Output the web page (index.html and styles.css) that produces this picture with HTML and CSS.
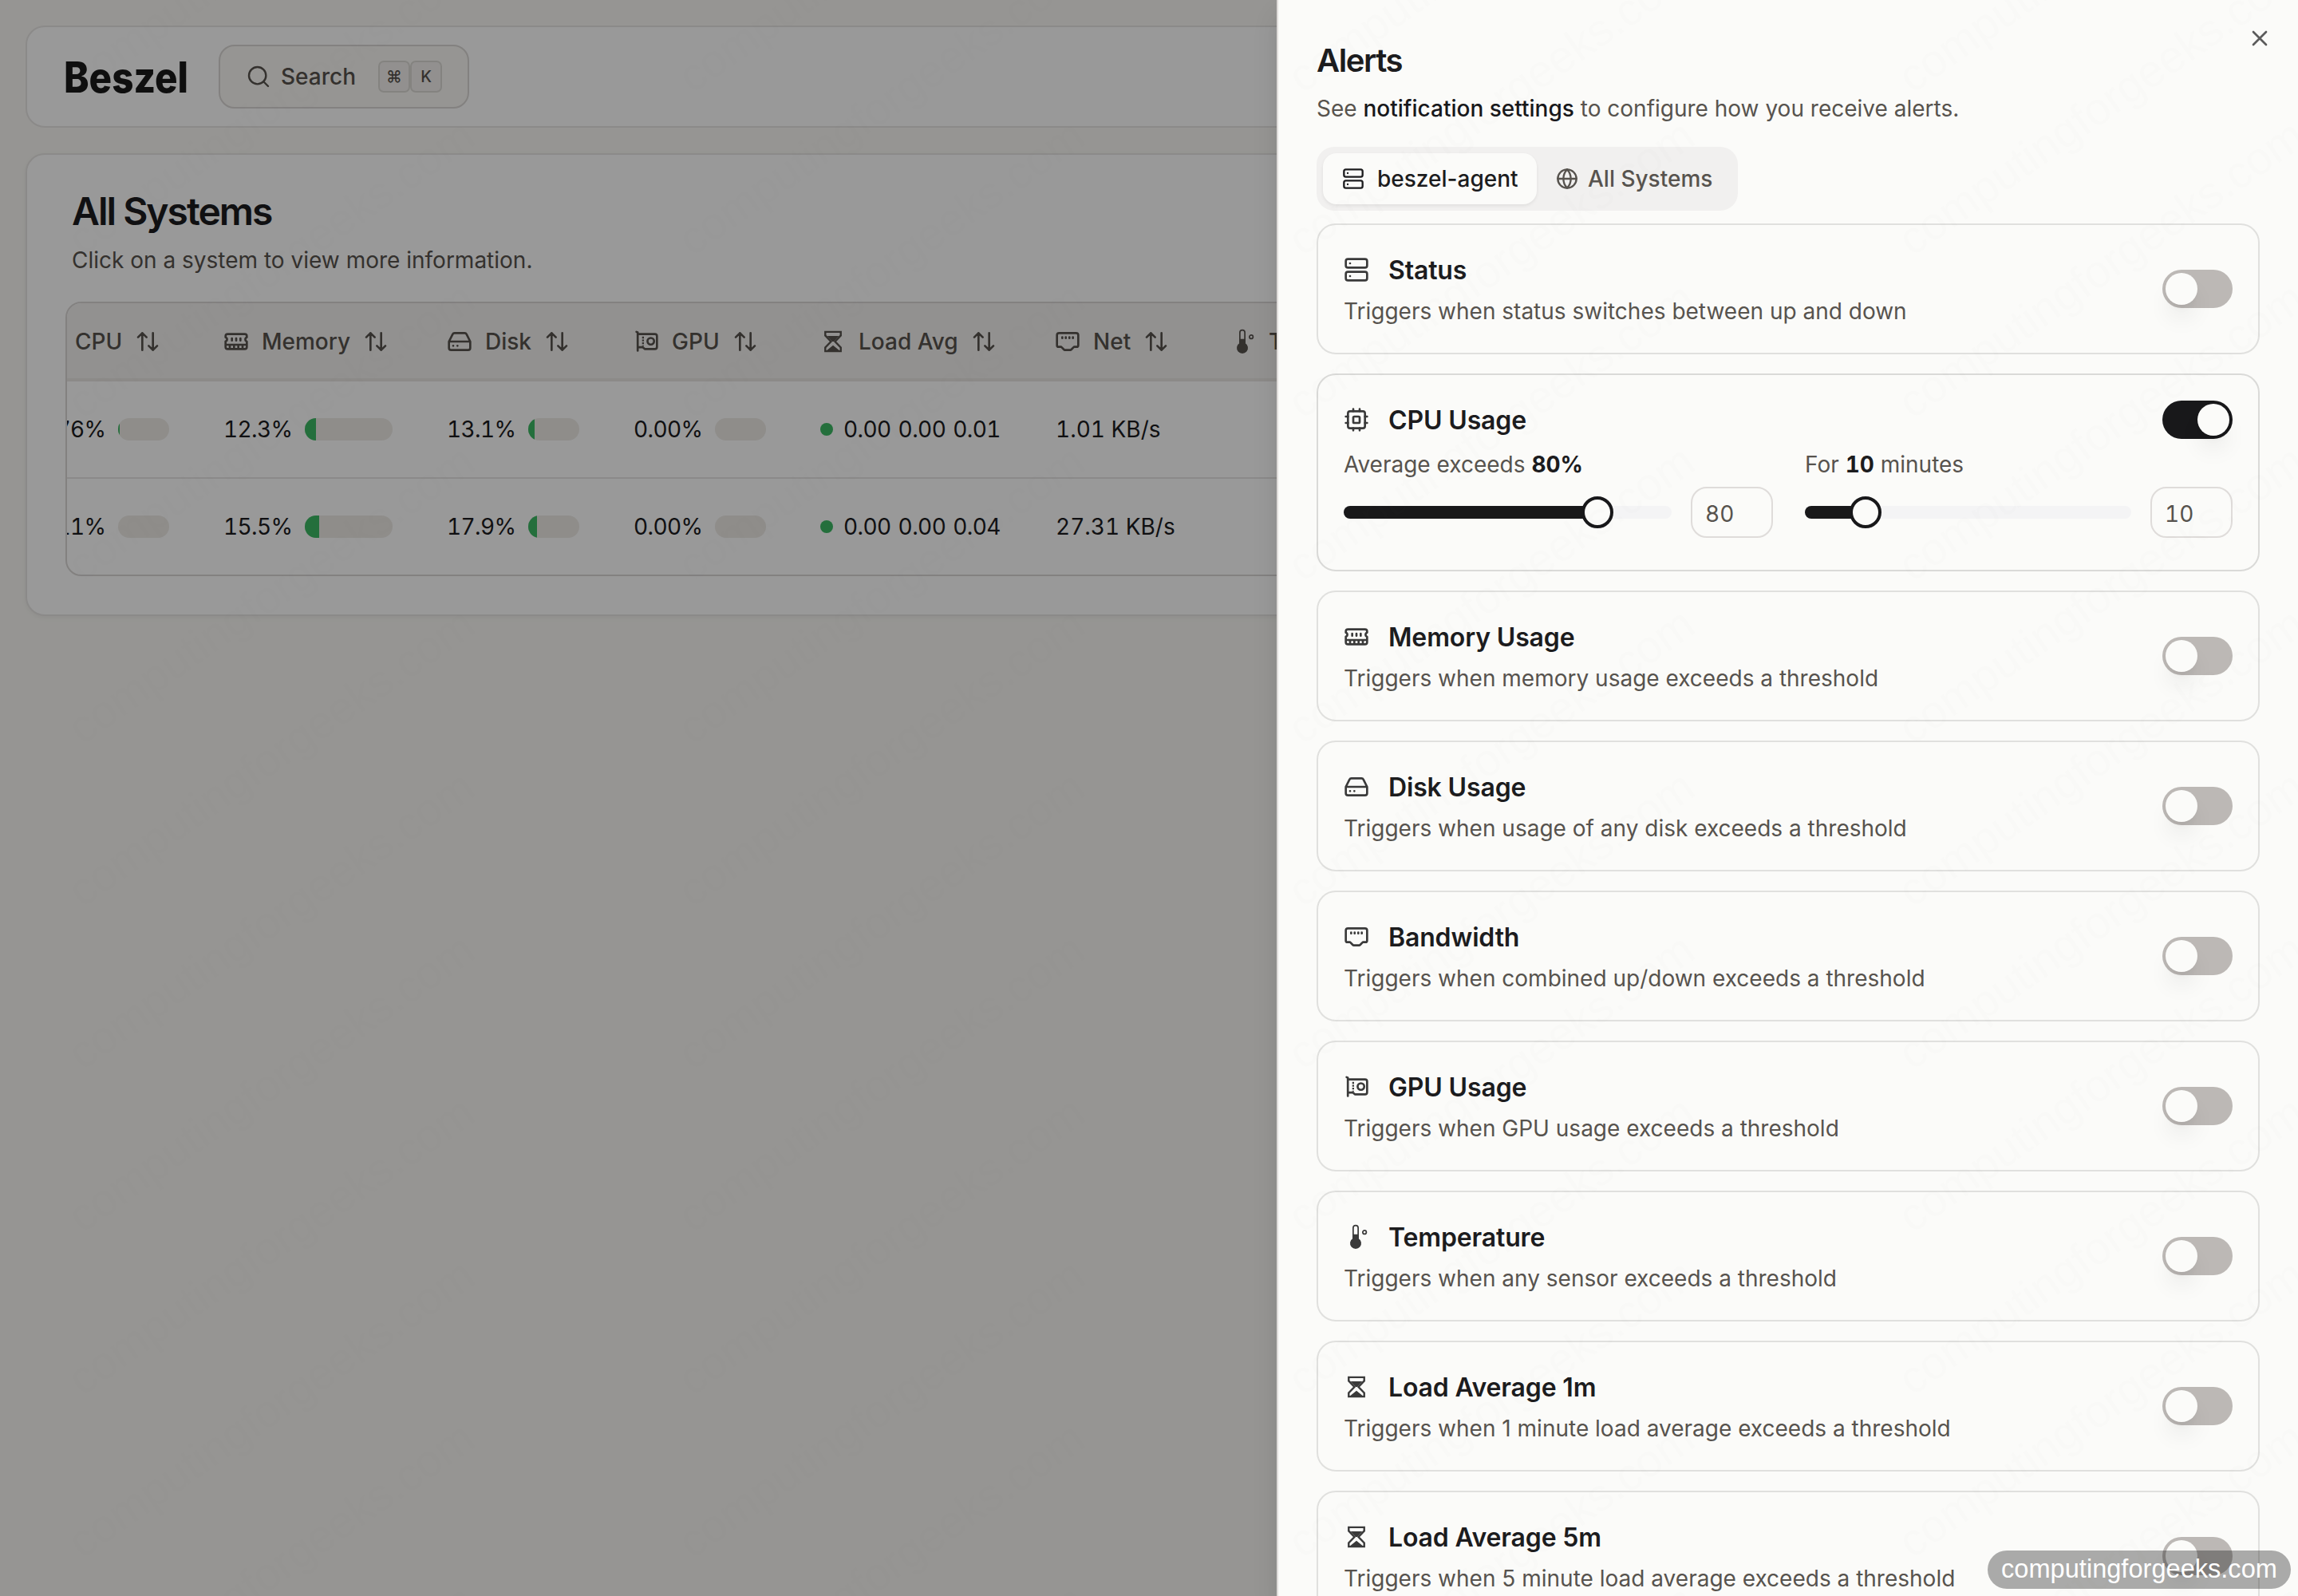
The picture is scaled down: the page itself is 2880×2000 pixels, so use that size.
FILE: index.html
```
<!DOCTYPE html>
<html lang="en">
<head>
	<meta charset="UTF-8">
	<title>All Systems / Beszel</title>
	<link rel="stylesheet" href="styles.css">
</head>
<body>
	<svg class="sprite" aria-hidden="true">
		<symbol id="i-search" viewBox="0 0 24 24"><circle cx="11" cy="11" r="8"/><path d="m21 21-4.3-4.3"/></symbol>
		<symbol id="i-sort" viewBox="0 0 24 24"><path d="m21 16-4 4-4-4M17 20V4M3 8l4-4 4 4M7 4v16"/></symbol>
		<symbol id="i-close" viewBox="0 0 24 24"><path d="M18 6 6 18M6 6l12 12"/></symbol>
		<symbol id="i-globe" viewBox="0 0 24 24"><circle cx="12" cy="12" r="10"/><path d="M12 2a14.5 14.5 0 0 0 0 20 14.5 14.5 0 0 0 0-20M2 12h20"/></symbol>
		<symbol id="i-server" viewBox="0 0 24 24"><rect x="2" y="2" width="20" height="8" rx="2"/><rect x="2" y="14" width="20" height="8" rx="2"/><path d="M6 6h.01M6 18h.01"/></symbol>
		<symbol id="i-cpu" viewBox="0 0 24 24"><rect x="4" y="4" width="16" height="16" rx="2"/><rect x="9" y="9" width="6" height="6" rx="1"/><path d="M15 2v2M15 20v2M2 15h2M2 9h2M20 15h2M20 9h2M9 2v2M9 20v2"/></symbol>
		<symbol id="i-memory" viewBox="0 0 24 24"><path d="M6 19v-3M10 19v-3M14 19v-3M18 19v-3M8 11V9M16 11V9M12 11V9M2 15h20M2 7a2 2 0 0 1 2-2h16a2 2 0 0 1 2 2v1.1a2 2 0 0 0 0 3.837V17a2 2 0 0 1-2 2H4a2 2 0 0 1-2-2v-5.1a2 2 0 0 0 0-3.837Z"/></symbol>
		<symbol id="i-disk" viewBox="0 0 24 24"><path d="M22 12H2M5.45 5.11 2 12v6a2 2 0 0 0 2 2h16a2 2 0 0 0 2-2v-6l-3.45-6.89A2 2 0 0 0 16.76 4H7.24a2 2 0 0 0-1.79 1.11zM6 16h.01M10 16h.01"/></symbol>
		<symbol id="i-gpu" viewBox="0 0 24 24"><path d="M2.7 2.9l1.2.5V20.6M3.9 5H20a2 2 0 0 1 2 2v10a2 2 0 0 1-2 2h-9.500l-2-1.700H3.900"/><circle cx="16.2" cy="11.7" r="3.1"/><path class="dash" d="M8.9 7.4v9"/></symbol>
		<symbol id="i-net" viewBox="0 0 24 24"><path d="M4 4h16a2 2 0 0 1 2 2v9.500a1.500 1.500 0 0 1-1.500 1.500H18l-2.700 2.700a1 1 0 0 1-.7.3H9.400a1 1 0 0 1-.7-.3L6 17H3.500A1.500 1.500 0 0 1 2 15.500V6a2 2 0 0 1 2-2zM7 8v.8M10.300 8v.8M13.700 8v.8M17 8v.8"/></symbol>
		<symbol id="i-hourglass" viewBox="0 0 24 24"><path class="sharp" d="M4.700 2.900h14.600V6.300L13.900 12l5.400 5.600v3.500H4.700v-3.500L10.100 12 4.700 6.300z"/><path class="solid" d="M6.500 6.700h11L12.700 12h-1.400zM12 15.600l5.800 4.700H6.200z"/></symbol>
		<symbol id="i-temp" viewBox="0 0 24 24"><path class="thin" d="M8.900 3.600a2.350 2.350 0 0 1 4.700 0V14a4.600 4.600 0 1 1-4.700 0z"/><path class="solid" d="M8.900 9.600h4.700V14a4.600 4.600 0 1 1-4.700 0z"/><circle class="thin" cx="19.600" cy="7.600" r="1.700"/></symbol>
	</svg>

	<div class="page">
		<div class="navbar">
			<svg class="logo" width="160" height="72"><text x="-2" y="56" textLength="156" lengthAdjust="spacingAndGlyphs">Beszel</text></svg>
			<div class="search">
				<svg class="icon"><use href="#i-search"/></svg>
				<span>Search</span>
				<div class="keys"><kbd>⌘</kbd><kbd>K</kbd></div>
			</div>
		</div>

		<div class="systems">
			<h1>All Systems</h1>
			<p>Click on a system to view more information.</p>
			<div class="table">
				<div class="row thead">
					<div class="cell"><svg class="icon"><use href="#i-cpu"/></svg>CPU<svg class="icon"><use href="#i-sort"/></svg></div>
					<div class="cell"><svg class="icon"><use href="#i-memory"/></svg>Memory<svg class="icon"><use href="#i-sort"/></svg></div>
					<div class="cell"><svg class="icon"><use href="#i-disk"/></svg>Disk<svg class="icon"><use href="#i-sort"/></svg></div>
					<div class="cell"><svg class="icon"><use href="#i-gpu"/></svg>GPU<svg class="icon"><use href="#i-sort"/></svg></div>
					<div class="cell"><svg class="icon"><use href="#i-hourglass"/></svg>Load Avg<svg class="icon"><use href="#i-sort"/></svg></div>
					<div class="cell"><svg class="icon"><use href="#i-net"/></svg>Net<svg class="icon"><use href="#i-sort"/></svg></div>
					<div class="cell"><svg class="icon"><use href="#i-temp"/></svg>Temp<svg class="icon"><use href="#i-sort"/></svg></div>
				</div>
				<div class="row">
					<div class="cell"><span class="num">0.76%</span><span class="meter"><i style="width:2.5%"></i></span></div>
					<div class="cell"><span class="num">12.3%</span><span class="meter wide"><i style="width:12.8%"></i></span></div>
					<div class="cell"><span class="num">13.1%</span><span class="meter"><i style="width:13.1%"></i></span></div>
					<div class="cell"><span class="num">0.00%</span><span class="meter"></span></div>
					<div class="cell load"><b class="dot"></b><span>0.00</span><span>0.00</span><span>0.01</span></div>
					<div class="cell net">1.01 KB/s</div>
					<div class="cell"></div>
				</div>
				<div class="row">
					<div class="cell"><span class="num">0.11%</span><span class="meter"></span></div>
					<div class="cell"><span class="num">15.5%</span><span class="meter wide"><i style="width:16%"></i></span></div>
					<div class="cell"><span class="num">17.9%</span><span class="meter"><i style="width:17.9%"></i></span></div>
					<div class="cell"><span class="num">0.00%</span><span class="meter"></span></div>
					<div class="cell load"><b class="dot"></b><span>0.00</span><span>0.00</span><span>0.04</span></div>
					<div class="cell net">27.31 KB/s</div>
					<div class="cell"></div>
				</div>
			</div>
		</div>
	</div>

	<div class="overlay"></div>

	<div class="sheet">
		<svg class="icon close"><use href="#i-close"/></svg>
		<h2>Alerts</h2>
		<p class="intro">See <b>notification settings</b> to configure how you receive alerts.</p>
		<div class="tabs">
			<div class="tab active"><svg class="icon"><use href="#i-server"/></svg>beszel-agent</div>
			<div class="tab"><svg class="icon"><use href="#i-globe"/></svg>All Systems</div>
		</div>
		<div class="alerts">
			<div class="alert">
				<div class="head">
					<div>
						<h3><svg class="icon"><use href="#i-server"/></svg><span>Status</span></h3>
						<p>Triggers when status switches between up and down</p>
					</div>
					<span class="switch"></span>
				</div>
			</div>
			<div class="alert open">
				<div class="head">
					<h3><svg class="icon"><use href="#i-cpu"/></svg><span>CPU Usage</span></h3>
					<span class="switch on"></span>
				</div>
				<div class="params">
					<div>
						<p>Average exceeds <b>80%</b></p>
						<div class="control">
							<div class="slider"><i class="fill" style="width:318px"></i><i class="thumb"></i></div>
							<div class="value">80</div>
						</div>
					</div>
					<div>
						<p>For <b>10</b> minutes</p>
						<div class="control">
							<div class="slider"><i class="fill" style="width:76px"></i><i class="thumb"></i></div>
							<div class="value">10</div>
						</div>
					</div>
				</div>
			</div>
			<div class="alert">
				<div class="head">
					<div>
						<h3><svg class="icon"><use href="#i-memory"/></svg><span>Memory Usage</span></h3>
						<p>Triggers when memory usage exceeds a threshold</p>
					</div>
					<span class="switch"></span>
				</div>
			</div>
			<div class="alert">
				<div class="head">
					<div>
						<h3><svg class="icon"><use href="#i-disk"/></svg><span>Disk Usage</span></h3>
						<p>Triggers when usage of any disk exceeds a threshold</p>
					</div>
					<span class="switch"></span>
				</div>
			</div>
			<div class="alert">
				<div class="head">
					<div>
						<h3><svg class="icon"><use href="#i-net"/></svg><span>Bandwidth</span></h3>
						<p>Triggers when combined up/down exceeds a threshold</p>
					</div>
					<span class="switch"></span>
				</div>
			</div>
			<div class="alert">
				<div class="head">
					<div>
						<h3><svg class="icon"><use href="#i-gpu"/></svg><span>GPU Usage</span></h3>
						<p>Triggers when GPU usage exceeds a threshold</p>
					</div>
					<span class="switch"></span>
				</div>
			</div>
			<div class="alert">
				<div class="head">
					<div>
						<h3><svg class="icon"><use href="#i-temp"/></svg><span>Temperature</span></h3>
						<p>Triggers when any sensor exceeds a threshold</p>
					</div>
					<span class="switch"></span>
				</div>
			</div>
			<div class="alert">
				<div class="head">
					<div>
						<h3><svg class="icon"><use href="#i-hourglass"/></svg><span>Load Average 1m</span></h3>
						<p>Triggers when 1 minute load average exceeds a threshold</p>
					</div>
					<span class="switch"></span>
				</div>
			</div>
			<div class="alert">
				<div class="head">
					<div>
						<h3><svg class="icon"><use href="#i-hourglass"/></svg><span>Load Average 5m</span></h3>
						<p>Triggers when 5 minute load average exceeds a threshold</p>
					</div>
					<span class="switch"></span>
				</div>
			</div>
		</div>
	</div>

	<svg class="watermark" id="watermark" width="2880" height="2000"></svg>
	<div class="badge">computingforgeeks.com</div>

	<script>
		// repeat the site name diagonally over the page
		var oMark=document.getElementById('watermark');
		for(var i=0;i<4;i++){
			for(var j=0;j<12;j++){
				var t=document.createElementNS('http://www.w3.org/2000/svg','text');
				t.setAttribute('transform','translate('+(103+i*764.5)+' '+(118+j*204)+') rotate(-35)');
				t.textContent='computingforgeeks.com';
				oMark.appendChild(t);
			}
		}
	</script>
</body>
</html>
```
FILE: styles.css
```
*{
	margin: 0;
	padding: 0;
	box-sizing: border-box;
}
body{
	width: 2880px;
	height: 2000px;
	overflow: hidden;
	position: relative;
	background: #faf9f5;
	color: #1c1c1e;
	font-family: Inter, "Liberation Sans", sans-serif;
	font-size: 28px;
	line-height: 40px;
}
.sprite{
	position: absolute;
	width: 0;
	height: 0;
}
.icon{
	width: 32px;
	height: 32px;
	flex: none;
	fill: none;
	stroke: currentColor;
	stroke-width: 2;
	stroke-linecap: round;
	stroke-linejoin: round;
}
.solid{
	fill: currentColor;
	stroke: none;
}
.thin{
	stroke-width: 1.3;
}
.sharp{
	stroke-width: 1.8;
	stroke-linejoin: miter;
}
.dash{
	stroke-width: 1.7;
	stroke-linecap: butt;
	stroke-dasharray: 1.7 1;
}

/* page behind the sheet */
.page{
	padding: 32px;
	display: flex;
	flex-direction: column;
	gap: 32px;
}
.navbar{
	height: 128px;
	display: flex;
	align-items: center;
	gap: 32px;
	padding-left: 48px;
	background: #fff;
	border: 2px solid #e8e6e4;
	border-radius: 24px;
}
.logo{
	overflow: visible;
}
.logo text{
	font-size: 53px;
	font-weight: 800;
	fill: #1a1a1a;
}
.search{
	width: 314px;
	height: 80px;
	display: flex;
	align-items: center;
	padding-left: 32px;
	background: #faf9f5;
	border: 2px solid #dad8d5;
	border-radius: 20px;
	color: #57534e;
	font-weight: 500;
}
.search span{
	margin-left: 12px;
}
.search .icon{
	stroke-width: 1.8;
}
.keys{
	display: flex;
	margin-left: 28px;
}
kbd{
	width: 40px;
	height: 40px;
	border: 2px solid #dcdad6;
	border-radius: 7px;
	background: #f3f1ee;
	font-family: inherit;
	font-size: 20px;
	line-height: 37px;
	text-align: center;
}
.systems{
	height: 580px;
	padding: 46px 48px;
	background: #fff;
	border: 2px solid #e8e6e4;
	border-radius: 24px;
	box-shadow: 0 2px 6px rgba(0,0,0,.05);
}
.systems h1{
	padding-left: 8px;
	font-size: 48px;
	line-height: 50px;
	font-weight: 600;
	letter-spacing: -2px;
}
.systems>p{
	margin-top: 16px;
	padding-left: 8px;
	line-height: 40px;
	color: #57534e;
}
.table{
	height: 344px;
	margin-top: 32px;
	overflow: hidden;
	border: 2px solid #dad8d6;
	border-radius: 20px;
}
.row{
	height: 122px;
	margin-left: -38px;
	display: grid;
	grid-template-columns: 234px 280px 234px 234px 294px 220px 300px;
	border-bottom: 2px solid #e8e6e4;
}
.row:last-child{
	height: 120px;
	border-bottom: 0;
}
.cell{
	display: flex;
	align-items: center;
}
.thead{
	height: 98px;
	padding-top: 2px;
	background: #f3f2f1;
	border-bottom: 4px solid #eae7e3;
	color: #57534e;
	font-weight: 500;
}
.thead .cell{
	gap: 16px;
}
.num{
	width: 102px;
	letter-spacing: -.6px;
	font-variant-numeric: tabular-nums;
}
.meter{
	width: 64px;
	height: 28px;
	overflow: hidden;
	border-radius: 14px;
	background: #eeebe7;
}
.meter.wide{
	width: 110px;
}
.meter i{
	display: block;
	height: 28px;
	background: #3cb964;
}
.load{
	gap: 9px;
	letter-spacing: -.6px;
	font-variant-numeric: tabular-nums;
}
.dot{
	width: 16px;
	height: 16px;
	margin-right: 4px;
	border-radius: 50%;
	background: #3cb964;
}
.net{
	padding-left: 1px;
	font-variant-numeric: tabular-nums;
}
.overlay{
	position: absolute;
	top: 0;
	left: 0;
	width: 2880px;
	height: 2000px;
	background: rgba(0,0,0,.4);
}

/* alerts sheet */
.sheet{
	position: absolute;
	top: 0;
	right: 0;
	width: 1280px;
	height: 2000px;
	padding: 52px 48px 0;
	overflow: hidden;
	background: #fbfbf9;
	border-left: 2px solid #dfdcda;
	box-shadow: 0 20px 30px rgba(0,0,0,.1);
}
.close{
	position: absolute;
	top: 32px;
	right: 32px;
	color: #5b5b5b;
}
.sheet h2{
	font-size: 40px;
	line-height: 48px;
	font-weight: 600;
	letter-spacing: -1.4px;
}
.intro{
	margin-top: 16px;
	color: #57534e;
}
.intro b{
	font-weight: 500;
	color: #18181b;
}
.tabs{
	width: 528px;
	height: 80px;
	margin-top: 28px;
	padding: 8px;
	display: flex;
	background: #f1f0ef;
	border-radius: 22px;
}
.tab{
	height: 64px;
	padding: 0 24px;
	display: flex;
	align-items: center;
	gap: 12px;
	border-radius: 17px;
	color: #57534e;
	font-weight: 500;
	white-space: nowrap;
}
.tab .icon{
	width: 28px;
	height: 28px;
}
.tab.active{
	width: 268px;
	gap: 16px;
	background: #fbfbf9;
	color: #1c1c1e;
	box-shadow: 0 2px 4px rgba(0,0,0,.07);
}
.alerts{
	margin-top: 16px;
	display: grid;
	gap: 24px;
}
.alert{
	height: 164px;
	padding: 32px;
	border: 2px solid #e0e0de;
	border-radius: 24px;
}
.alert.open{
	height: 248px;
	border-color: #dadad8;
}
.head{
	display: flex;
	align-items: center;
	justify-content: space-between;
}
.alert h3{
	height: 48px;
	display: flex;
	align-items: center;
	gap: 24px;
	font-size: 32px;
	line-height: 48px;
	font-weight: 600;
	letter-spacing: -.15px;
}
.alert h3 span{
	padding-top: 2px;
}
.alert h3 .icon{
	color: #3a3a3a;
}
.alert p{
	color: #57534e;
}
.head p{
	margin-top: 8px;
}
.switch{
	width: 88px;
	height: 48px;
	padding: 4px;
	border-radius: 24px;
	background: #bcb8b5;
}
.switch::before{
	content: "";
	display: block;
	width: 40px;
	height: 40px;
	border-radius: 50%;
	background: #fbfbf9;
	box-shadow: 0 20px 30px -6px rgba(0,0,0,.1), 0 8px 12px -8px rgba(0,0,0,.1);
}
.switch.on{
	background: #18181a;
}
.switch.on::before{
	margin-left: 40px;
}
.params{
	margin-top: 12px;
	display: grid;
	grid-template-columns: 538px 536px;
	gap: 40px;
}
.params b{
	font-weight: 700;
	color: #1c1c1e;
	font-variant-numeric: tabular-nums;
}
.control{
	margin-top: 8px;
	display: flex;
	align-items: center;
	gap: 24px;
}
.slider{
	flex: 1;
	height: 16px;
	display: flex;
	align-items: center;
	border-radius: 8px;
	background: #f4f4f5;
}
.fill{
	height: 16px;
	border-radius: 8px 0 0 8px;
	background: #18181a;
}
.thumb{
	width: 40px;
	height: 40px;
	margin-left: -20px;
	border: 4px solid #18181a;
	border-radius: 50%;
	background: #fbfbf9;
}
.value{
	width: 103px;
	height: 64px;
	padding: 2px 0 0 16px;
	border: 2px solid #dfdcda;
	border-radius: 20px;
	line-height: 60px;
	color: #57534e;
	font-variant-numeric: tabular-nums;
}

.watermark{
	position: absolute;
	top: 0;
	left: 0;
}
.watermark text{
	font-family: "Liberation Sans", sans-serif;
	font-size: 57px;
	fill: rgba(120,120,120,.016);
}
.badge{
	position: absolute;
	right: 9px;
	bottom: 9px;
	width: 380px;
	height: 48px;
	border-radius: 24px;
	background: rgba(0,0,0,.32);
	color: #fff;
	font-family: "Liberation Sans", sans-serif;
	font-size: 32.6px;
	line-height: 46px;
	text-align: center;
}
```
